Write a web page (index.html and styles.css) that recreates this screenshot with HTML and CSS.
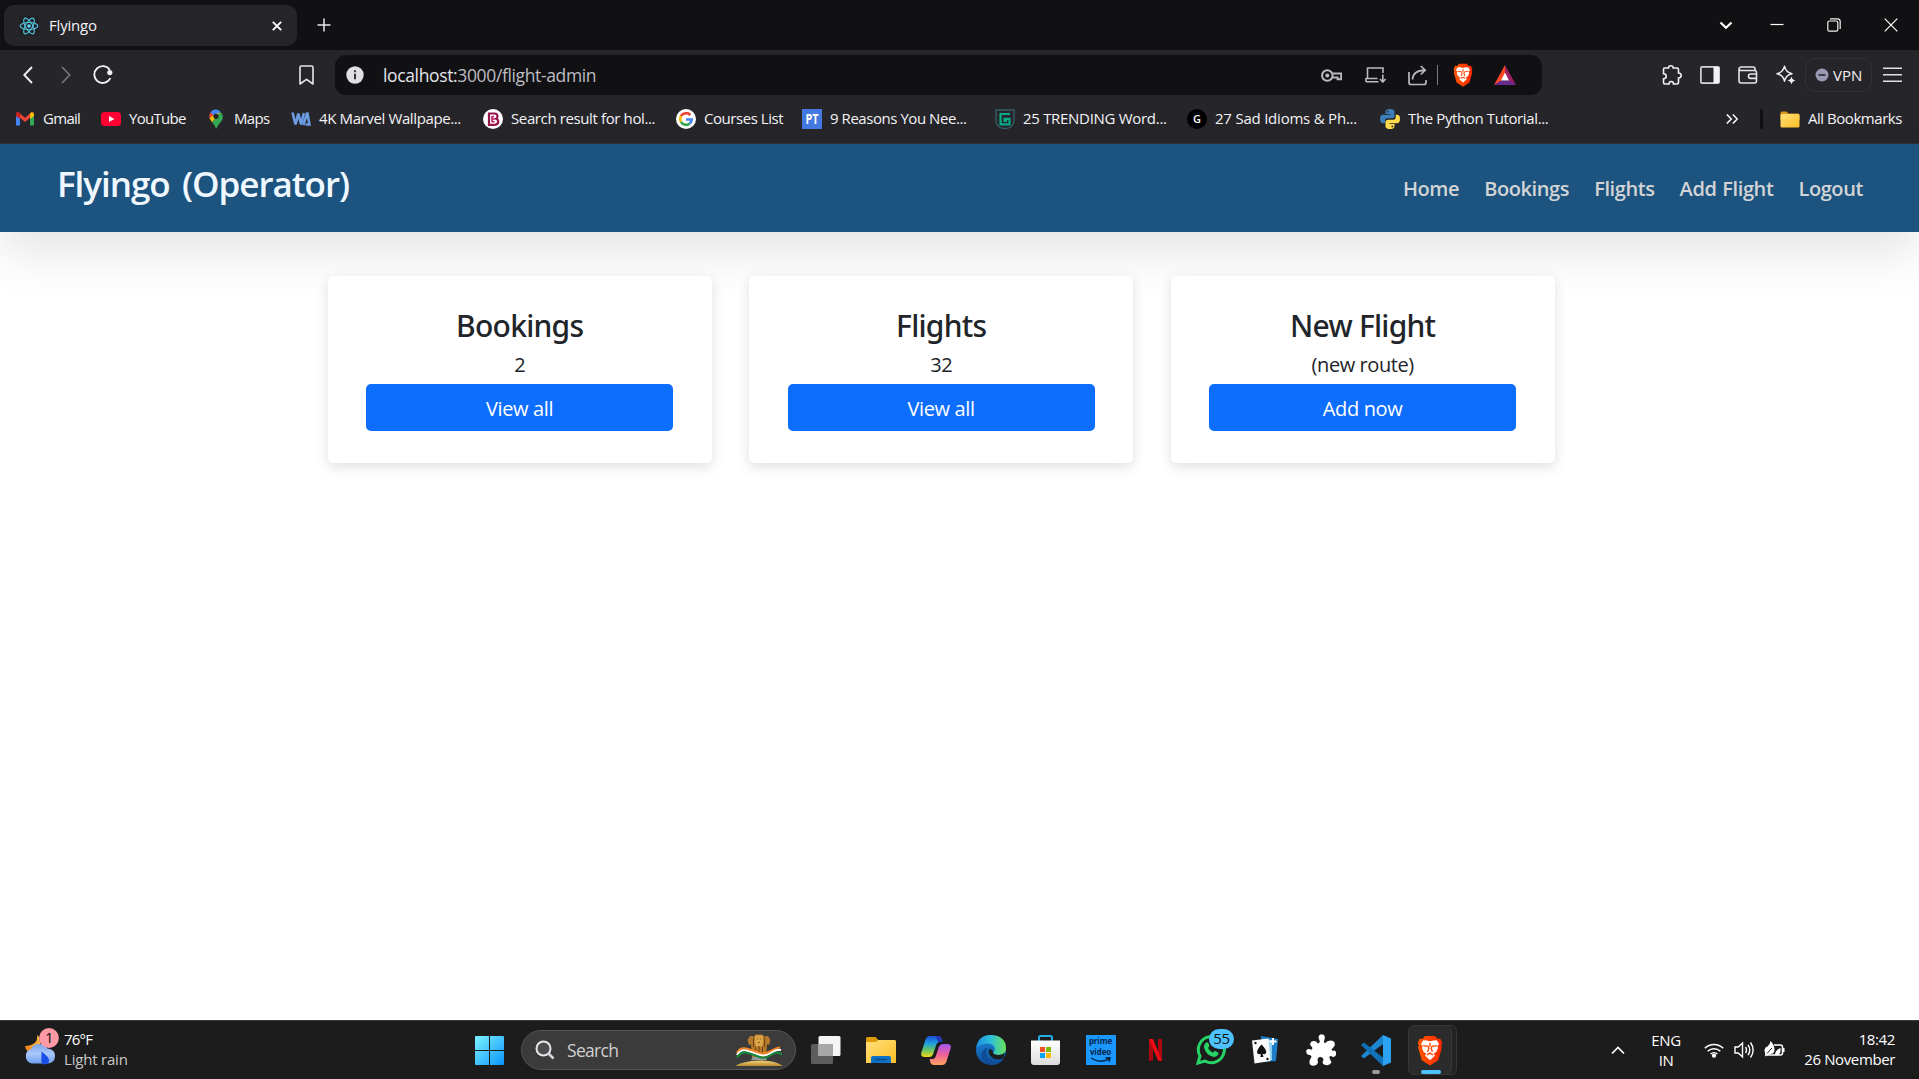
FILE: index.html
```html
<!DOCTYPE html>
<html lang="en">
<head>
<meta charset="utf-8">
<title>Flyingo</title>
<link rel="stylesheet" href="styles.css">
</head>
<body>
<svg class="defs" width="0" height="0" aria-hidden="true">
  <defs>
    <linearGradient id="gWin" x1="0" y1="0" x2="1" y2="1"><stop offset="0" stop-color="#7df3ff"/><stop offset="1" stop-color="#0a93fa"/></linearGradient>
    <linearGradient id="gBrave" x1="0" y1="0" x2="1" y2="0"><stop offset="0" stop-color="#ff5601"/><stop offset="1" stop-color="#ff2a00"/></linearGradient>
    <linearGradient id="gFolder" x1="0" y1="0" x2="1" y2="1"><stop offset="0" stop-color="#ffe07a"/><stop offset="1" stop-color="#fdbd25"/></linearGradient>
    <linearGradient id="gCloud" x1="0" y1="0" x2="0" y2="1"><stop offset="0" stop-color="#7ea6ec"/><stop offset=".5" stop-color="#a9c8fa"/><stop offset="1" stop-color="#6f9ff0"/></linearGradient>
    <linearGradient id="gMoon" x1="0" y1="1" x2="1" y2="0"><stop offset="0" stop-color="#f37b16"/><stop offset="1" stop-color="#ffc64a"/></linearGradient>
    <linearGradient id="gStore" x1="0" y1="0" x2="0" y2="1"><stop offset="0" stop-color="#fff"/><stop offset="1" stop-color="#dcdcdc"/></linearGradient>
    <linearGradient id="gCopA" x1="0" y1="0" x2="0" y2="1"><stop offset="0" stop-color="#1b4fd8"/><stop offset=".35" stop-color="#1d9fe0"/><stop offset=".65" stop-color="#5fc36b"/><stop offset="1" stop-color="#f4d714"/></linearGradient>
    <linearGradient id="gCopB" x1="0" y1="0" x2="0" y2="1"><stop offset="0" stop-color="#a457f0"/><stop offset=".5" stop-color="#f0609a"/><stop offset="1" stop-color="#ffa45c"/></linearGradient>
    <linearGradient id="gEdgeA" x1="0" y1="0" x2="1" y2="0"><stop offset="0" stop-color="#1a8fe0"/><stop offset=".5" stop-color="#2fc0d8"/><stop offset="1" stop-color="#6be257"/></linearGradient>
    <linearGradient id="gEdgeB" x1="0" y1="0" x2="0" y2="1"><stop offset="0" stop-color="#1b8ad8"/><stop offset="1" stop-color="#0c4fa0"/></linearGradient>
    <linearGradient id="gGold" x1="0" y1="0" x2="0" y2="1"><stop offset="0" stop-color="#f4d57c"/><stop offset="1" stop-color="#b98a2e"/></linearGradient>
    <symbol id="brave" viewBox="0 0 26 32">
      <path d="M8 1h10l3 3 2.600-.4L25.500 8l-.8 3 .6 2-3.800 13L13 31.500 4.500 26 .7 13l.6-2L.5 8l1.900-4.400L5 4z" fill="url(#gBrave)"/>
      <path d="M13 6.500l3.500-.8 3.500-.2 2.500 4-2 1.500.8 2.500-1.800 4-2.500 1.500L18 21.500 13 26l-5-4.500 1-2.500-2.500-1.500-1.800-4 .8-2.500-2-1.500 2.500-4 3.500.2z" fill="#fff"/>
      <path d="M6 11l5 .8.800 2-1.300 3.500M20 11l-5 .8-.8 2 1.300 3.500M9.800 20.600l3.200-1.900 3.200 1.900M13 8v4" stroke="#ff4500" stroke-width="1.400" fill="none"/>
    </symbol>
    <symbol id="folder" viewBox="0 0 20 17">
      <path d="M0.500 2.500q0-2 1.500-2h4.500l2 2H18q1.500 0 1.500 2V9H.5z" fill="#d99a1c"/>
      <rect x=".5" y="3" width="19" height="13.500" rx="1.500" fill="url(#gFolder)"/>
    </symbol>
  </defs>
</svg>

<header class="browser">
  <div class="tabs">
    <div class="tab">
      <svg class="favicon" viewBox="0 0 20 20"><rect width="20" height="20" fill="#202124"/><g fill="none" stroke="#53bdd8" stroke-width="1.200"><ellipse cx="10" cy="10" rx="8.800" ry="3.500"/><ellipse cx="10" cy="10" rx="8.800" ry="3.500" transform="rotate(60 10 10)"/><ellipse cx="10" cy="10" rx="8.800" ry="3.500" transform="rotate(120 10 10)"/></g><circle cx="10" cy="10" r="1.800" fill="#61dafb"/></svg>
      <span class="tab-title">Flyingo</span>
      <svg class="tab-close" viewBox="0 0 10 10"><path d="M.8.8l8.400 8.400M9.200.8L.8 9.200" stroke="#fff" stroke-width="1.900"/></svg>
    </div>
    <svg class="new-tab" viewBox="0 0 14 14"><path d="M7 .5v13M.5 7h13" stroke="#e8e8ea" stroke-width="1.500"/></svg>
    <div class="window-buttons">
      <svg width="14" height="14" viewBox="0 0 14 14"><path d="M1.500 4.500L7 9.800l5.500-5.300" fill="none" stroke="#fff" stroke-width="2.200"/></svg>
      <svg width="14" height="14" viewBox="0 0 14 14"><path d="M.5 6.500h13" stroke="#fff" stroke-width="1.200"/></svg>
      <svg width="14" height="14" viewBox="0 0 14 14" fill="none" stroke="#f2f2f2" stroke-width="1.200"><rect x=".8" y="3" width="10" height="10.200" rx="1.600"/><path d="M3 .9h7.500q2.700 0 2.700 2.700V11"/></svg>
      <svg width="14" height="14" viewBox="0 0 14 14"><path d="M.7.7l12.600 12.600M13.300.7L.7 13.300" stroke="#fff" stroke-width="1.200"/></svg>
    </div>
  </div>

  <div class="toolbar">
    <div class="nav-icons">
      <svg width="10" height="18" viewBox="0 0 10 18"><path d="M9 1L1.300 9 9 17" fill="none" stroke="#f0f0f2" stroke-width="1.900"/></svg>
      <svg width="10" height="18" viewBox="0 0 10 18"><path d="M1 1l7.700 8L1 17" fill="none" stroke="#77767c" stroke-width="1.700"/></svg>
      <svg width="20" height="20" viewBox="0 0 20 20"><path d="M16.800 5A8.400 8.400 0 1 0 17.400 13" fill="none" stroke="#f0f0f2" stroke-width="1.800"/><circle cx="16.800" cy="7.600" r="2.600" fill="#f0f0f2"/></svg>
    </div>
    <svg class="bookmark-page" viewBox="0 0 15 20"><path d="M2.500 1h10q1.500 0 1.500 1.500V19l-6.500-4.600L1 19V2.500Q1 1 2.500 1z" fill="none" stroke="#e6e6e9" stroke-width="1.600" stroke-linejoin="round"/></svg>
    <div class="address">
      <svg class="info" viewBox="0 0 18 18"><circle cx="9" cy="9" r="8.700" fill="#dfdfe6"/><path d="M9 7.800v5.400M9 4.300v2" stroke="#2a2a2e" stroke-width="1.900"/></svg>
      <span class="url"><span class="url-host">localhost:</span>3000/flight-admin</span>
      <div class="address-icons">
        <svg width="21" height="15" viewBox="0 0 20 14" fill="none" stroke="#b9b9be" stroke-width="1.900"><circle cx="6" cy="7" r="5"/><path d="M11 5h8.200v5.500h-3.400V8.800h-5"/><circle cx="6" cy="7" r="1" fill="#b9b9be"/></svg>
        <svg width="21" height="16" viewBox="0 0 21 16" fill="none" stroke="#b9b9be" stroke-width="1.600"><path d="M2.500 11V1h15.500v5M1 11.500h11.500M1 14.700h12.500M1 11v4M17.800 7.500V15M15 12l2.800 3 2.800-3"/></svg>
        <svg width="20" height="21" viewBox="0 0 20 21" fill="none" stroke="#b9b9be" stroke-width="1.700"><path d="M1 7v10.500Q1 19.500 3 19.500h13q2 0 2-2V15M4.500 14.500Q5 5.500 17 5.200M12.800 1l4.400 4.200-4.400 4.300"/></svg>
        <span class="address-rule"></span>
        <svg width="20" height="24"><use href="#brave"/></svg>
        <svg width="22" height="20" viewBox="0 0 22 20"><path d="M11 0L0 20l7.200-4L11 8.500z" fill="#ff4724"/><path d="M11 0l11 20-7.200-4L11 8.500z" fill="#9e1f63"/><path d="M0 20h22l-7.200-4.500H7.200z" fill="#662d91"/><path d="M11 7.500l4 8H7z" fill="#fff"/></svg>
      </div>
    </div>
    <div class="extension-icons">
      <svg width="20" height="20" viewBox="0 0 20 20" fill="none" stroke="#f0f0f2" stroke-width="1.600"><path d="M2.500 3h4Q6.500.8 8.800.8T11.200 3H15q1.500 0 1.500 1.500V8q2.700.2 2.700 2.500t-2.700 2.500v4.500q0 1.500-1.500 1.500h-3.500q0-2.500-2.200-2.500T7 19H3q-1.500 0-1.500-1.500v-3.800q2.700 0 2.700-2.500T1.500 8.700V4.500Q1.500 3 2.500 3z"/></svg>
      <svg width="20" height="18" viewBox="0 0 20 18"><rect x=".9" y=".9" width="18" height="16.200" rx="1.200" fill="none" stroke="#d6d6da" stroke-width="1.700"/><rect x="13.500" y="1" width="6" height="16" fill="#f2f2f4"/></svg>
      <svg width="20" height="18" viewBox="0 0 20 18" fill="none" stroke="#e6e6e9" stroke-width="1.600"><path d="M1 3.500v11Q1 17 3 17h13.500q2 0 2-2V6.500q0-2-2-2H3Q1 4.500 1 3t2-2h12q2 0 2 2v1M19 8h-6.500q-2 0-2 2.200t2 2.200H19"/></svg>
      <svg width="20" height="20" viewBox="0 0 20 20"><path d="M8.500 1.200q1.300 6.300 7.500 7.500-6.200 1.200-7.500 7.500Q7.200 9.900 1 8.700 7.200 7.500 8.500 1.200z" fill="none" stroke="#f0f0f2" stroke-width="1.500" stroke-linejoin="round"/><path d="M15.500 11.500q.7 3.300 4 4-3.300.7-4 4-.7-3.300-4-4 3.300-.7 4-4z" fill="#f0f0f2"/></svg>
    </div>
    <div class="vpn"><svg width="14" height="14" viewBox="0 0 14 14"><circle cx="7" cy="7" r="6.500" fill="#9a9ab4"/><path d="M3.500 7h7" stroke="#26252a" stroke-width="1.600"/></svg><span>VPN</span></div>
    <svg class="menu" viewBox="0 0 19 16"><path d="M0 1.300h19M0 7.800h19M0 14.300h19" stroke="#e0e0e2" stroke-width="1.600"/></svg>
  </div>

  <div class="bookmarks">
    <a class="bm"><svg viewBox="0 0 20 20"><path d="M1 5v11.500h4V8z" fill="#4285f4"/><path d="M19 5v11.500h-4V8z" fill="#34a853"/><path d="M1 5.500Q1 3 3.500 3.300L10 8.700l6.500-5.400Q19 3 19 5.500L10 13z" fill="#ea4335"/><path d="M15 4.600l1.500-1.300Q19 3 19 5.500V7l-4 3z" fill="#fbbc04"/><path d="M5 4.600L3.500 3.300Q1 3 1 5.500V7l4 3z" fill="#c5221f"/></svg>Gmail</a>
    <a class="bm"><svg viewBox="0 0 20 20"><rect y="3" width="20" height="14" rx="3.500" fill="#ff0033"/><path d="M8 7l5.300 3L8 13z" fill="#fff"/></svg>YouTube</a>
    <a class="bm"><svg viewBox="0 0 20 20"><path d="M10 .5A7 7 0 0 0 4.500 3.200L10 8l4.500-5A7 7 0 0 0 10 .5z" fill="#4285f4"/><path d="M4.500 3.200Q2.200 6 3.500 9L8 5.500z" fill="#ea4335"/><path d="M3.500 9q.8 2 2.700 4.200L14.500 3 8 5.500z" fill="#fbbc04"/><path d="M14.500 3q3.300 3 2 7-.6 1.700-3 4.500Q11 17.500 10 20q-.8-3.300-3.800-6.800z" fill="#34a853"/><path d="M10 .5A7 7 0 0 0 4.500 3.200L7.500 6 14.500 3A7 7 0 0 0 10 .5z" fill="#4285f4"/><circle cx="10" cy="7.300" r="2.600" fill="#26252a"/></svg>Maps</a>
    <a class="bm"><svg viewBox="0 0 20 20" fill="none" stroke="#6b9be0" stroke-width="2.600"><path d="M1.500 3.500l3 12 2.800-11 2.800 11L12.800 4"/><path d="M12.300 16L16 4.500h.5L18.500 15.500H14.500"/></svg>4K Marvel Wallpape...</a>
    <a class="bm"><svg viewBox="0 0 20 20"><circle cx="10" cy="10" r="10" fill="#fff"/><path d="M6 4.500h5.500q3 0 3 2.800 0 1.700-1.300 2.400 2 .7 2 2.900 0 3.200-3.500 3.200H6z" fill="none" stroke="#96164c" stroke-width="2.200"/><path d="M9 7v6M9 7.500h2M9 10h2.500M9 12.800h2.500" stroke="#c2185b" stroke-width="1.500"/></svg>Search result for hol...</a>
    <a class="bm"><svg viewBox="0 0 20 20"><circle cx="10" cy="10" r="10" fill="#fff"/><g fill="none" stroke-width="2.600"><path d="M14.400 6A5.800 5.800 0 0 0 5 7.200" stroke="#ea4335"/><path d="M5 7.200a5.800 5.800 0 0 0 0 5.600" stroke="#fbbc05"/><path d="M5 12.800a5.800 5.800 0 0 0 8.800 1.700" stroke="#34a853"/><path d="M13.800 14.500a5.800 5.800 0 0 0 2-4H10" stroke="#4285f4"/></g></svg>Courses List</a>
    <a class="bm"><svg viewBox="0 0 20 20"><rect width="20" height="20" fill="#4479e2"/><text x="10" y="15.300" class="pt-mark" text-anchor="middle" textLength="13" lengthAdjust="spacingAndGlyphs">PT</text></svg>9 Reasons You Nee...</a>
    <a class="bm"><svg viewBox="0 0 20 20" fill="none"><path d="M1 1h18v10q0 5-4 7.500Q12.500 19.500 10 19.500T5 18.500Q1 16 1 11z" stroke="#35606a" stroke-width="1.300"/><path d="M15 5H5.500v10.300h9V9.800H9.500v2h2.500" stroke="#07a98b" stroke-width="2.200"/></svg>25 TRENDING Word...</a>
    <a class="bm"><svg viewBox="0 0 20 20"><circle cx="10" cy="10" r="10" fill="#000"/><text x="10" y="14.200" class="g-mark" text-anchor="middle">G</text></svg>27 Sad Idioms &amp; Ph...</a>
    <a class="bm"><svg viewBox="0 0 20 20"><path d="M10 0Q5.500 0 5.500 2.800V5H10.500v.8H3.300Q0 5.800 0 10t3 4.200h2V11.600Q5 9.200 7.500 9.200h4.700q2.300 0 2.300-2.300V2.800Q14.500 0 10 0z" fill="#3d7fb8"/><path d="M10 20q4.500 0 4.500-2.800V15H9.500v-.8h7.200Q20 14.200 20 10t-3-4.200h-1.300v2.600q0 2.400-2.500 2.400H8.500q-3 0-3 2.300v4.100Q5.500 20 10 20z" fill="#ffdc4b"/><circle cx="7.700" cy="2.600" r=".9" fill="#26252a"/><circle cx="12.300" cy="17.400" r=".9" fill="#26252a"/></svg>The Python Tutorial...</a>
    <div class="bookmarks-end">
      <svg width="12" height="10" viewBox="0 0 12 10"><path d="M.8.5L5.300 5 .8 9.500M6.800.5L11.300 5 6.800 9.500" fill="none" stroke="#fff" stroke-width="1.500"/></svg>
      <span class="bookmarks-rule"></span>
      <a class="all-bm"><svg width="20" height="17"><use href="#folder"/></svg>All Bookmarks</a>
    </div>
  </div>
</header>

<main class="page">
  <nav class="site-nav">
    <h1 class="brand">Flyingo (Operator)</h1>
    <div class="links"><a>Home</a><a>Bookings</a><a>Flights</a><a>Add Flight</a><a>Logout</a></div>
  </nav>
  <section class="cards">
    <article class="card"><h3>Bookings</h3><p>2</p><button>View all</button></article>
    <article class="card"><h3>Flights</h3><p>32</p><button>View all</button></article>
    <article class="card"><h3>New Flight</h3><p>(new route)</p><button>Add now</button></article>
  </section>
</main>

<footer class="taskbar">
  <div class="weather">
    <svg width="36" height="38" viewBox="0 0 36 38"><path d="M12 8q1 5-2.500 8T0 19q1 7 8 7l8-6-2-10z" fill="url(#gMoon)"/><path d="M7 36.500a7.500 7.500 0 0 1-1-14.500Q8 17 14.500 17q5.500 0 8 4.500 7.500.5 7.500 7.500t-7 7.500z" fill="url(#gCloud)"/><path d="M16.500 24.500q7.500 5.500 7.500 9t-3.700 4q-4 0-4-4.500z" fill="#1b50e8"/><circle cx="24" cy="11" r="9.900" fill="#ff99a4"/><text x="24" y="16.200" text-anchor="middle" class="badge-text">1</text></svg>
    <div class="weather-text"><span class="temp">76°F</span><span class="cond">Light rain</span></div>
  </div>

  <div class="start"><svg width="29" height="29" viewBox="0 0 29 29"><path d="M1 0h13v14H0V1q0-1 1-1zM15 0h13q1 0 1 1v13H15zM0 15h14v14H1q-1 0-1-1zM15 15h14v13q0 1-1 1H15z" fill="url(#gWin)"/></svg></div>
  <div class="search">
    <svg width="20" height="20" viewBox="0 0 20 20"><circle cx="8.500" cy="8.500" r="7" fill="#4d4d4d" stroke="#e4e6ea" stroke-width="2"/><path d="M13.500 13.500l5 5" stroke="#d4d6da" stroke-width="2.500"/></svg>
    <span>Search</span>
    <svg class="emblem" viewBox="0 0 48 33"><path d="M0 32Q8 27 24 26.500T48 32z" fill="url(#gGold)"/><path d="M16 26l2-4h12l2 4z" fill="#9a9a9e"/><path d="M20.500.5h7l1.500 2 4-.5 2.500 4-1.500 5-2-.5L31 23H17L16 10.500l-2 .5L12.500 6 15 2l4 .5z" fill="#b5792c"/><path d="M20.500 1.500h7l.8 6-1.300 5h-6l-1.300-5z" fill="#dca548"/><path d="M18.500 4v9M29.500 4v9M20.500 13v9M24 12v10M27.500 13v9" stroke="#70410f" stroke-width="1" fill="none"/><path d="M22 5h1M25 5h1M23 8.500h2" stroke="#8a5518" stroke-width="1"/><g fill="none" stroke-width="2.100"><path d="M2 19q3-6 9-4.500t12 4 13-1.500 9-3.500" stroke="#f58220"/><path d="M2 21q4-6 9-4.500t12 4 13-1.500 10-3" stroke="#fff"/><path d="M2 23.500q4-6 9-5t12 4 13-1.500 11-.5" stroke="#16883b"/></g></svg>
  </div>
  <div class="apps">
    <div class="app"><svg width="30" height="28" viewBox="0 0 30 28"><rect y="8" width="22" height="20" rx="1.500" fill="#5d5d5d"/><rect x="7.500" width="22" height="20" rx="1.500" fill="#f4f4f4"/><path d="M7.500 8H22v12H7.500z" fill="#a7a7a7"/></svg></div>
    <div class="app"><svg width="30" height="26" viewBox="0 0 30 26"><path d="M0 1.500Q0 0 1.500 0h8l3 3H28q2 0 2 2v6H0z" fill="#dd9b07"/><path d="M0 5h10l2.500-2H28.500q1.500 0 1.500 1.500V26H0z" fill="url(#gFolder)"/><path d="M5 26v-5q0-2 2-2h16q2 0 2 2v5z" fill="#0d72c5"/><path d="M9 22.500h12" stroke="#0a4d8c" stroke-width="1.500"/></svg></div>
    <div class="app"><svg width="30" height="29" viewBox="0 0 30 29"><path d="M9 0h8q3 0 3.700 3l.8 3h-3q-2.500 0-3.500 3.500l-3 9Q11 21 8 21H3.500Q-.8 21 .4 16.500L4.500 3.500Q5.800 0 9 0z" fill="url(#gCopA)"/><path d="M21 29h-8q-3 0-3.700-3l-.8-3h3q2.500 0 3.500-3.500l3-9Q19 8 22 8h4.500q4.300 0 3.100 4.500l-4.100 13Q24.200 29 21 29z" fill="url(#gCopB)"/><path d="M14.500 0H17q3 0 3.700 3l.8 3h-4z" fill="#2238b8"/></svg></div>
    <div class="app"><svg width="30" height="30" viewBox="0 0 30 30"><circle cx="15" cy="15" r="15" fill="url(#gEdgeB)"/><path d="M.2 13Q2 0 15 0q14.800.8 15 13 0 7-7.500 7-5 0-5.500-2.500 2.500-2 1.500-5-1.500-4-7.500-4T.2 13z" fill="url(#gEdgeA)"/><path d="M11.500 12.500q-3 7 2 11.500 6 4.500 14 .5Q23 30 15 30 5 28 5.500 19q1-5 6-6.500z" fill="#0f4d99"/><path d="M17 17.500q.5 2.500 5.500 2.500 4 0 6-2l-1 5q-5.500 3-10.500.3-5.500-3.300-4-9 4-.5 4 3.200z" fill="#1d1d1d"/></svg></div>
    <div class="app"><svg width="29" height="30" viewBox="0 0 29 30"><path d="M8 7V2.500Q8 1 9.500 1h10Q21 1 21 2.500V7" fill="none" stroke="#25aee4" stroke-width="2"/><path d="M0 5.500h29V27q0 3-3 3H3q-3 0-3-3z" fill="url(#gStore)"/><path d="M9 12h5v5H9z" fill="#f25022"/><path d="M15 12h5v5h-5z" fill="#7fba00"/><path d="M9 18h5v5H9z" fill="#00a4ef"/><path d="M15 18h5v5h-5z" fill="#ffb900"/></svg></div>
    <div class="app"><div class="prime"><span>prime</span><span>video</span><svg width="22" height="6" viewBox="0 0 22 6"><path d="M1 1q9 6 18 .8M15.500 1l4.500-.3-1 4" fill="none" stroke="#06264a" stroke-width="1.500"/></svg></div></div>
    <div class="app"><svg width="13" height="22" viewBox="0 0 13 22"><path d="M0 0h4v21.500L0 22zM9 0h4v22l-4-.5z" fill="#a90610"/><path d="M0 0h4l9 22-4-.5z" fill="#ee0a17"/></svg></div>
    <div class="app"><svg width="30" height="30" viewBox="0 0 30 30"><path d="M2 28l2-7A13 13 0 1 1 9 26z" fill="none" stroke="#25d366" stroke-width="3"/><path d="M9.500 8q2-1.500 3 .5l1 2.500-1.500 2q2 3.500 5 4.700l1.700-1.900 3.300 1.600q1 .6.3 2.100-1.800 3-5.300 2.300Q10 20 8 12.500 7.800 9.800 9.500 8z" fill="#25d366"/></svg><span class="badge">55</span></div>
    <div class="app"><svg width="28" height="28" viewBox="0 0 28 28"><path d="M9 0l17 3-2 22-14 1z" fill="#1e7fc8"/><path d="M11 3l9 1v20h-9z" fill="#8fd0f5"/><path d="M0 4.500L16.500 2.500 18.500 25 2.500 27.500z" fill="#fafafa"/><path d="M9.500 8.500q5 5 4.800 8-.8 2.500-3.800 1.300l1 3.200H8.300l.7-3q-3.500 1-4-1.700.2-3.300 4.500-7.800z" fill="#111"/><circle cx="3.500" cy="7" r="1.200" fill="#111"/><circle cx="15.500" cy="23" r="1.200" fill="#111"/><path d="M21 2v7M17.500 5.500h7" stroke="#fff" stroke-width="2"/></svg></div>
    <div class="app"><svg width="30" height="32" viewBox="0 0 30 32"><path d="M5 8q4-2.500 7 1.500 2.500-.5 1.500-3Q11 1 15 .3q5 0 3.500 5-1 3 .5 4Q22 5.500 27 7q2.500 1 1.500 5l-3 3.500q.5 2 3 1 2.500 1.500 1.200 5-1.700 2.500-4.700.5-2 0-1.500 2l2 4.500Q23 32.500 18 30.500q-2.500-1.500-.5-4.500-.5-3.500-4-3-3 1-1.500 4.500 0 4-4.500 4.200Q3 32 3.500 27l2-4.500Q5 20.500 3 21q-3.500-1-2.700-4.500 1.700-2.500 5-.8 1.700-.7.7-2.700Q3 11 5 8z" fill="#fff"/></svg></div>
    <div class="app running"><svg width="30" height="31" viewBox="0 0 30 31"><path d="M22 0l8 3.500v24L22 31z" fill="#2ba2f2"/><path d="M22 0v9L3 23.500 0 21z" fill="#1c86cf"/><path d="M0 10l3-2.500L22 22.500V31z" fill="#0f72b8"/></svg></div>
    <div class="app active"><div class="tile"><svg width="26" height="31"><use href="#brave"/></svg></div></div>
  </div>

  <div class="tray">
    <svg class="tray-caret" viewBox="0 0 14 9"><path d="M1 7.500L7 1.500l6 6" fill="none" stroke="#fff" stroke-width="1.700"/></svg>
    <div class="lang"><span>ENG</span><span>IN</span></div>
    <div class="status">
      <svg width="20" height="16" viewBox="0 0 20 16" fill="none" stroke="#fff" stroke-width="1.500"><path d="M.8 6.300a13 13 0 0 1 18.400 0M3.700 9.200a9 9 0 0 1 12.600 0M6.600 12a5 5 0 0 1 6.800 0"/><circle cx="10" cy="13.700" r="1.400" fill="#fff"/></svg>
      <svg width="20" height="18" viewBox="0 0 20 18" fill="none" stroke="#fff" stroke-width="1.400"><path d="M1 6h3.200L8.500 2v14l-4.300-4H1zM11.500 6q2 3 0 6M14 3.800q3.600 5.200 0 10.400M16.500 1.500q5.200 7.500 0 15"/></svg>
      <svg width="21" height="18" viewBox="0 0 21 18"><path d="M10 4h6.500q2 0 2 2v6q0 2-2 2H3" fill="none" stroke="#fff" stroke-width="1.500"/><path d="M19.500 7v4" stroke="#fff" stroke-width="2"/><path d="M6.500 0q4 4 4 8.500t-4.500 4.500L1 15.500Q1.500 12 .5 10q0-4 3-4.500Q6 4 6.500 0zM11 14q0-5 5.500-7 .5 6-2.500 7z" fill="#fff"/><path d="M3 12.500L8 7" stroke="#1c1c1c"/></svg>
    </div>
    <div class="clock"><span>18:42</span><span>26 November</span></div>
  </div>
</footer>
</body>
</html>
```
FILE: styles.css
```css
* { box-sizing: border-box; }

body {
  margin: 0;
  height: 1079px;
  display: flex;
  flex-direction: column;
  overflow: hidden;
  font-family: "Open Sans", "Noto Sans", sans-serif;
  font-size: 15px;
  letter-spacing: -.38px;
  background: #fff;
}

svg { display: block; flex: none; }
.defs { position: absolute; }
h1, h3, p { margin: 0; }

/* Browser window */
.browser { height: 144px; flex: none; background: #26252a; color: #f3f3f5; border-bottom: 1px solid #323136; }
.tabs { height: 50px; background: #111113; display: flex; align-items: center; padding: 1px 21px 0 4px; }
.tab { width: 293px; height: 41px; border-radius: 10px; background: #26252a; display: flex; align-items: center; padding: 0 15px 0 15px; }
.favicon { width: 20px; height: 20px; }
.tab-title { margin-left: 9px; padding: 0 0 2px 1px; flex: 1; letter-spacing: -.2px; }
.tab-close { width: 10px; height: 10px; }
.new-tab { width: 14px; height: 14px; margin: 0 0 1px 19.500px; }
.window-buttons { margin-left: auto; display: flex; gap: 43px; padding-bottom: 1px; }
.window-buttons svg:first-child { margin-right: -6px; }

.toolbar { height: 50px; display: flex; align-items: center; padding: 0 17px 0 22.500px; }
.nav-icons { width: 276.500px; display: flex; align-items: center; gap: 28px; }
.nav-icons svg:last-child { margin-left: -6px; }
.bookmark-page { width: 15px; height: 20px; }
.address { margin-left: 21px; width: 1207px; height: 40px; border-radius: 11px; background: #111113; display: flex; align-items: center; padding: 0 26px 0 11px; }
.info { width: 18px; height: 18px; }
.url { margin-left: 19px; padding-bottom: 1px; flex: 1; font-size: 17.500px; letter-spacing: -.36px; color: #bdbdc2; }
.url-host { color: #e4e4e8; }
.address-icons { display: flex; align-items: center; }
.address-icons svg:nth-of-type(2) { margin-left: 23px; }
.address-icons svg:nth-of-type(3) { margin-left: 22px; }
.address-rule { width: 1px; height: 20px; background: #7b7b80; margin: 0 15px 0 9px; }
.address-icons svg:nth-of-type(5) { margin-left: 21px; }
.extension-icons { margin-left: 120px; display: flex; align-items: center; gap: 18px; }
.vpn { margin-left: 9px; width: 67px; height: 34px; border: 1px solid #323137; border-radius: 10px; display: flex; align-items: center; gap: 4px; padding-left: 9px; letter-spacing: 0; }
.menu { width: 19px; height: 16px; margin-left: 11px; }

.bookmarks { height: 36px; display: grid; grid-template-columns: 86px 105px 85px 192px 193px 126px 193px 192px 193px 180px 1fr; padding: 0 17px 0 15px; }
.bm, .all-bm { display: flex; align-items: center; gap: 8px; white-space: nowrap; }
.bm svg { width: 20px; height: 20px; }
.bookmarks svg, .bookmarks-rule { margin-top: 2px; }
.bm:nth-child(-n+3) { letter-spacing: -.7px; }
.bm:nth-child(8) { letter-spacing: -.3px; }
.bm:nth-child(9) { letter-spacing: -.22px; }
.bm:nth-child(6), .bm:nth-child(7) { letter-spacing: -.45px; }
.pt-mark { font: 700 14px "Open Sans", sans-serif; fill: #fff; letter-spacing: 0; }
.g-mark { font: 600 11px "Open Sans", sans-serif; fill: #fff; letter-spacing: 0; }
.bookmarks-end { display: flex; align-items: center; justify-content: flex-end; letter-spacing: -.45px; }
.bookmarks-rule { width: 3px; height: 20px; border-radius: 2px; background: #111113; margin: 2px 17px 0 22px; }

/* Flyingo site */
.page { flex: 1; }
.site-nav { height: 88px; background: #1d537f; display: flex; align-items: center; justify-content: space-between; padding: 0 56px 0 57px; box-shadow: 0 20px 50px rgba(0, 0, 0, .11); }
.brand { font-size: 35px; font-weight: 600; line-height: 48px; letter-spacing: -1.050px; word-spacing: 4.500px; color: #f0f8ff; padding-bottom: 9px; }
.links { display: flex; gap: 25px; font-size: 20px; font-weight: 600; letter-spacing: -.4px; word-spacing: 1px; color: #d2d4d6; }

.cards { display: grid; grid-template-columns: repeat(3, 384px); gap: 37.500px; padding: 44px 0 0 327.700px; position: relative; }
.card { height: 187px; background: #fff; border-radius: 5px; padding: 32px 38.400px; box-shadow: 0 4px 13px rgba(0, 0, 0, .13); text-align: center; color: #212529; font-size: 20px; }
.card h3 { font-family: "Noto Sans", "Open Sans", sans-serif; font-size: 30px; font-weight: 500; line-height: 36px; letter-spacing: -.75px; margin-bottom: 6px; }
.card p { line-height: 30px; letter-spacing: -.42px; margin-bottom: 4px; }
.card button { display: block; width: 307px; height: 47px; border: 0; border-radius: 5px; background: #0d6efd; color: #fff; font: inherit; letter-spacing: -.35px; padding: 1px 0 0; }

/* Windows taskbar */
.taskbar { height: 59px; flex: none; background: #1c1c1c; border-top: 1px solid #3a3a3a; color: #fff; display: flex; align-items: center; }
.weather { width: 475px; display: flex; align-items: center; padding-left: 25px; }
.weather svg { margin-top: -8px; }
.weather-text { display: flex; flex-direction: column; line-height: 20px; margin-left: 3px; padding-bottom: 2px; }
.temp { letter-spacing: -.8px; }
.cond { color: #c8c8c8; letter-spacing: -.2px; }
.badge-text { font: 15px "Open Sans", sans-serif; fill: #111; }
.start { width: 46px; }
.search { width: 275px; height: 40px; border-radius: 20px; background: #3b3b3b; border: 1px solid #555; display: flex; align-items: center; padding: 0 12px 0 13px; font-size: 17.500px; letter-spacing: -.7px; color: #d0d0d0; }
.search span { margin-left: 12px; flex: 1; }
.emblem { width: 48px; height: 33px; }
.apps { display: flex; margin-left: 2px; }
.app { width: 55px; height: 50px; display: flex; align-items: center; justify-content: center; position: relative; }
.prime { width: 30px; height: 30px; background: #1a98ff; color: #06264a; display: flex; flex-direction: column; align-items: center; font-size: 8px; font-weight: 700; line-height: 11px; letter-spacing: -.1px; }
.prime svg { margin-top: 0; }
.badge { position: absolute; left: 26px; top: 4px; width: 25px; height: 20px; border-radius: 10px; background: #4cc2ff; color: #111; line-height: 19px; text-align: center; }
.running::after, .active::after { content: ""; position: absolute; bottom: 1px; height: 4px; border-radius: 2px; }
.running::after { width: 8px; background: #9a9a9a; }
.active::after { width: 20px; background: #4cc2ff; }
.tile { width: 44px; height: 50px; margin-left: -1px; border-radius: 6px; background: #2b2b2b; border: 1px solid #363636; display: flex; align-items: center; justify-content: center; box-shadow: 5px 0 0 -1px #222, 5px 0 0 0 #363636; }
.tray { margin-left: auto; display: flex; align-items: center; padding-right: 24px; line-height: 20px; }
.tray-caret { width: 14px; height: 9px; }
.lang { width: 32px; margin-left: 25px; padding-bottom: 1px; display: flex; flex-direction: column; text-align: center; }
.status { display: flex; align-items: center; gap: 10px; margin-left: 22px; padding-bottom: 1px; }
.clock { width: 110px; padding-bottom: 2px; display: flex; flex-direction: column; text-align: right; }
```
